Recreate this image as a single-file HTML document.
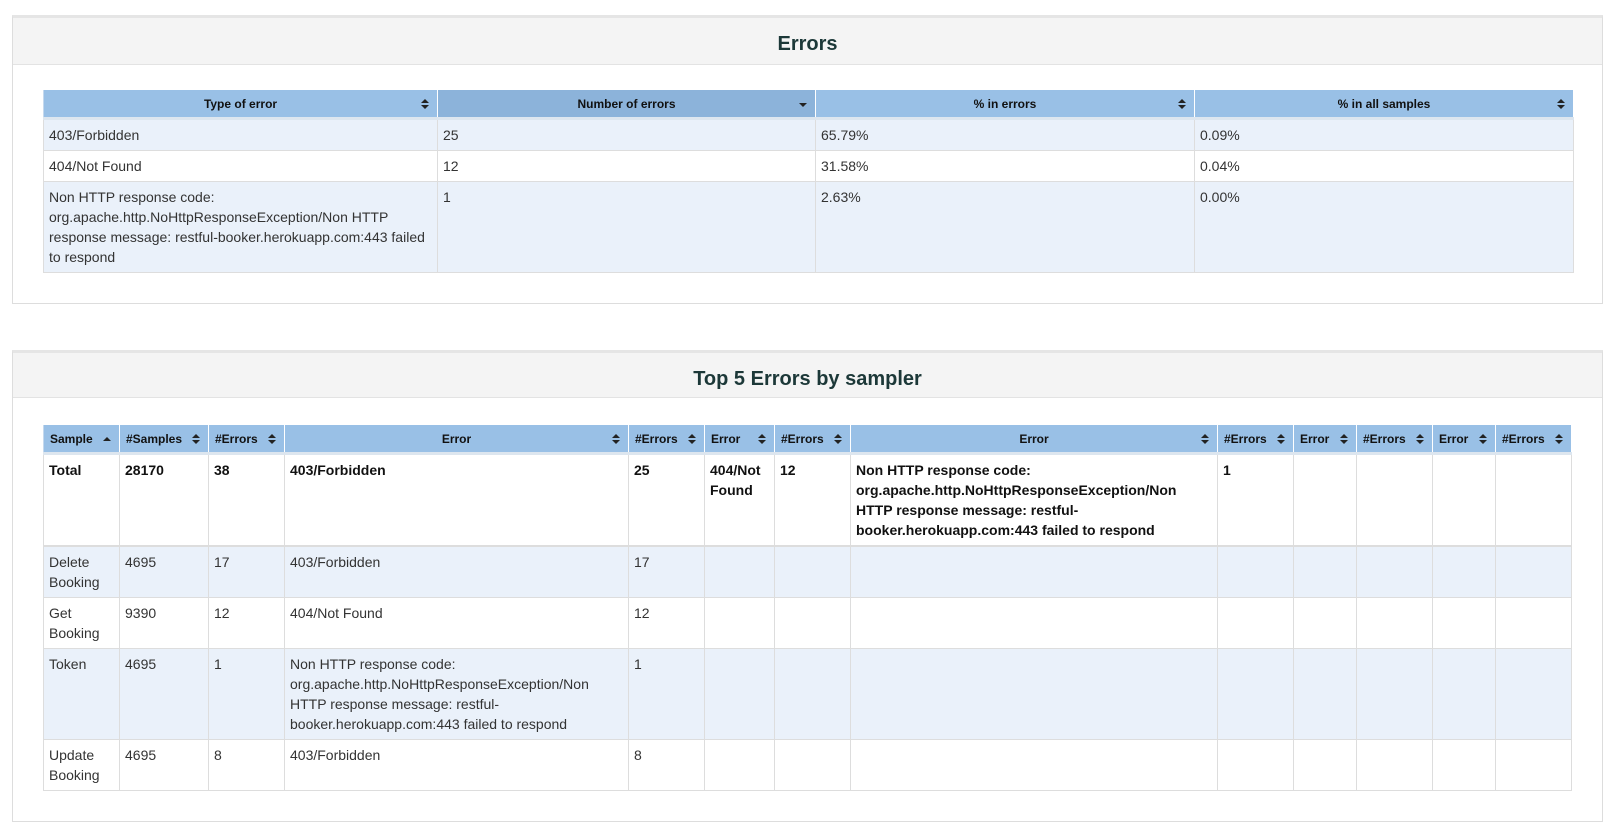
<!DOCTYPE html>
<html><head><meta charset="utf-8"><style>
body{margin:0;background:#fff;font-family:"Liberation Sans",Arial,sans-serif;font-size:14px;color:#333;}
.panel{position:absolute;left:12px;width:1591px;border:1px solid #ddd;border-top:3px solid #e5e5e5;background:#fff;box-sizing:border-box;}
.ph{background:#f4f4f4;border-bottom:1px solid #e3e3e3;height:46px;text-align:center;font-size:20px;font-weight:bold;color:#1c3838;line-height:52px;}
table{position:absolute;left:30px;border-collapse:collapse;table-layout:fixed;}
th{background:#99c0e6;border:1px solid #fff;border-bottom:3px solid #dde6ef;border-left:1px solid #c5d9ee;font-size:12px;font-weight:bold;color:#111;height:27px;padding:0 6px;position:relative;text-align:center;}
th.act{background:#8cb3da;}
th:after{content:"";position:absolute;right:8px;top:9px;width:0;height:0;border-left:4px solid transparent;border-right:4px solid transparent;border-bottom:4px solid #222;}
th:before{content:"";position:absolute;right:8px;top:15px;width:0;height:0;border-left:4px solid transparent;border-right:4px solid transparent;border-top:4px solid #222;}
th.dn:after{display:none}
th.up:before{display:none}
th.up:after{top:12px}
th.dn:before{top:13px}
td{border:1px solid #ddd;padding:5px 5px;vertical-align:top;line-height:20px;}
tr.o td{background:#eaf1fa;}
tr.b td{font-weight:bold;color:#111;border-bottom:2px solid #ddd;}
</style></head><body>
<div class="panel" style="top:15px;height:289px;">
<div class="ph">Errors</div>
<table style="top:71px;width:1530px;">
<colgroup><col style="width:394px"><col style="width:378px"><col style="width:379px"><col style="width:379px"></colgroup>
<tr><th>Type of error</th><th class="act dn">Number of errors</th><th>% in errors</th><th>% in all samples</th></tr>
<tr class="o"><td>403/Forbidden</td><td>25</td><td>65.79%</td><td>0.09%</td></tr>
<tr><td>404/Not Found</td><td>12</td><td>31.58%</td><td>0.04%</td></tr>
<tr class="o"><td>Non HTTP response code: org.apache.http.NoHttpResponseException/Non HTTP response message: restful-booker.herokuapp.com:443 failed to respond</td><td>1</td><td>2.63%</td><td>0.00%</td></tr>
</table>
</div>
<div class="panel" style="top:350px;height:472px;">
<div class="ph" style="height:36px;line-height:36px;padding-top:8px;">Top 5 Errors by sampler</div>
<table style="top:71px;width:1528px;">
<colgroup><col style="width:76px"><col style="width:89px"><col style="width:76px"><col style="width:344px"><col style="width:76px"><col style="width:70px"><col style="width:76px"><col style="width:367px"><col style="width:76px"><col style="width:63px"><col style="width:76px"><col style="width:63px"><col style="width:76px"></colgroup>
<tr><th class="up" style="text-align:left">Sample</th><th style="text-align:left">#Samples</th><th style="text-align:left">#Errors</th><th>Error</th><th style="text-align:left">#Errors</th><th style="text-align:left">Error</th><th style="text-align:left">#Errors</th><th>Error</th><th style="text-align:left">#Errors</th><th style="text-align:left">Error</th><th style="text-align:left">#Errors</th><th style="text-align:left">Error</th><th style="text-align:left">#Errors</th></tr>
<tr class="b" style="height:92px"><td>Total</td><td>28170</td><td>38</td><td>403/Forbidden</td><td>25</td><td>404/Not Found</td><td>12</td><td>Non HTTP response code: org.apache.http.NoHttpResponseException/Non HTTP response message: restful-booker.herokuapp.com:443 failed to respond</td><td>1</td><td></td><td></td><td></td><td></td></tr>
<tr class="o" style="height:51px"><td>Delete Booking</td><td>4695</td><td>17</td><td>403/Forbidden</td><td>17</td><td></td><td></td><td></td><td></td><td></td><td></td><td></td><td></td></tr>
<tr style="height:51px"><td>Get Booking</td><td>9390</td><td>12</td><td>404/Not Found</td><td>12</td><td></td><td></td><td></td><td></td><td></td><td></td><td></td><td></td></tr>
<tr class="o"><td>Token</td><td>4695</td><td>1</td><td>Non HTTP response code: org.apache.http.NoHttpResponseException/Non HTTP response message: restful-booker.herokuapp.com:443 failed to respond</td><td>1</td><td></td><td></td><td></td><td></td><td></td><td></td><td></td><td></td></tr>
<tr style="height:51px"><td>Update Booking</td><td>4695</td><td>8</td><td>403/Forbidden</td><td>8</td><td></td><td></td><td></td><td></td><td></td><td></td><td></td><td></td></tr>
</table>
</div>
</body></html>
